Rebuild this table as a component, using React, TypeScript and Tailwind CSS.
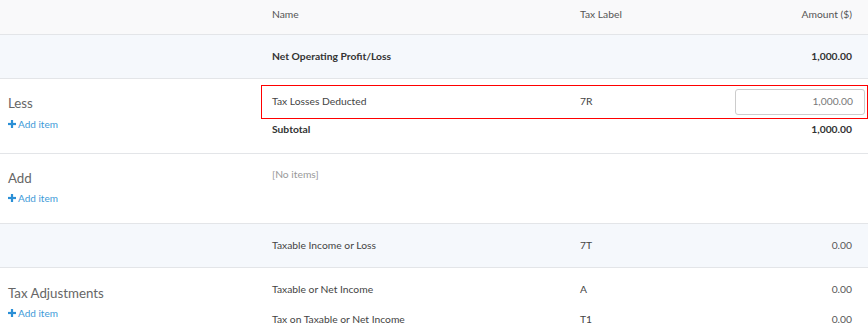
import React from "react";

const font = { fontFamily: "Lato, 'Open Sans', sans-serif" };

function AddItem() {
  return (
    <div className="flex items-center gap-[2px] text-[10px] text-[#3d9ad8] leading-none">
      <svg width="8" height="8" viewBox="0 0 8 8">
        <rect x="2.9" y="0" width="2.2" height="8" fill="#2b8fd6" />
        <rect x="0" y="2.9" width="8" height="2.2" fill="#2b8fd6" />
      </svg>
      <span>Add item</span>
    </div>
  );
}

function Row({
  name,
  label,
  amount,
  bold,
  className = "",
}: {
  name: string;
  label?: string;
  amount?: string;
  bold?: boolean;
  className?: string;
}) {
  return (
    <div className={`flex items-center text-[10.3px] ${className}`}>
      <div className={`w-[319px] pl-[11px] ${bold ? "font-bold text-[#333]" : "text-[#444]"}`}>{name}</div>
      <div className="flex-1 text-[#444]">{label}</div>
      <div className={`pr-4 text-right ${bold ? "font-bold text-[#333]" : "text-[#555]"}`}>{amount}</div>
    </div>
  );
}

export default function App() {
  return (
    <div className="w-[868px] h-[334px] overflow-hidden bg-white" style={font}>
      {/* header */}
      <div className="flex h-[35px] border-b border-[#e3e5e8] bg-[#f9f9fa]">
        <div className="w-[261px]" />
        <div className="flex-1 flex items-center pb-[4px] text-[10.3px] text-[#555]">
          <div className="w-[319px] pl-[11px]">Name</div>
          <div className="flex-1">Tax Label</div>
          <div className="pr-4 text-right">Amount ($)</div>
        </div>
      </div>
      {/* Net operating */}
      <div className="flex h-[44px] border-b border-[#e3e5e8] bg-[#f5f8fc]">
        <div className="w-[261px]" />
        <Row className="flex-1" name="Net Operating Profit/Loss" amount="1,000.00" bold />
      </div>
      {/* Less */}
      <div className="flex h-[75px] border-b border-[#e3e5e8]">
        <div className="w-[261px] pl-2 pt-[15px]">
          <div className="text-[13.3px] leading-[18px] text-[#666]">Less</div>
          <div className="mt-[7px]">
            <AddItem />
          </div>
        </div>
        <div className="flex-1 pt-[6px]">
          <div className="flex items-center h-[34px] border border-[#ff0000] text-[10.3px]">
            <div className="w-[318px] pl-[10px] text-[#444]">Tax Losses Deducted</div>
            <div className="flex-1 text-[#444]">7R</div>
            <div className="w-[130px] h-[26px] mr-[2px] border border-[#ccc] rounded-[3px] flex items-center justify-end pr-[11px] text-[#777]">
              1,000.00
            </div>
          </div>
          <Row className="h-[22px]" name="Subtotal" amount="1,000.00" bold />
        </div>
      </div>
      {/* Add */}
      <div className="flex h-[70px] border-b border-[#e3e5e8]">
        <div className="w-[261px] pl-2 pt-[15px]">
          <div className="text-[13.3px] leading-[18px] text-[#666]">Add</div>
          <div className="mt-[6px]">
            <AddItem />
          </div>
        </div>
        <div className="flex-1 pt-[14px] pl-[11px] text-[10.3px] leading-[12px] text-[#999]">[No items]</div>
      </div>
      {/* Taxable income */}
      <div className="flex h-[44px] border-b border-[#e3e5e8] bg-[#f5f8fc]">
        <div className="w-[261px]" />
        <Row className="flex-1" name="Taxable Income or Loss" label="7T" amount="0.00" />
      </div>
      {/* Tax adjustments */}
      <div className="flex">
        <div className="w-[261px] pl-2 pt-[16px]">
          <div className="text-[13.3px] leading-[18px] text-[#666]">Tax Adjustments</div>
          <div className="mt-[6px]">
            <AddItem />
          </div>
        </div>
        <div className="flex-1 pt-[12px]">
          <Row className="h-[20px]" name="Taxable or Net Income" label="A" amount="0.00" />
          <Row className="h-[20px] mt-[10px]" name="Tax on Taxable or Net Income" label="T1" amount="0.00" />
        </div>
      </div>
    </div>
  );
}
